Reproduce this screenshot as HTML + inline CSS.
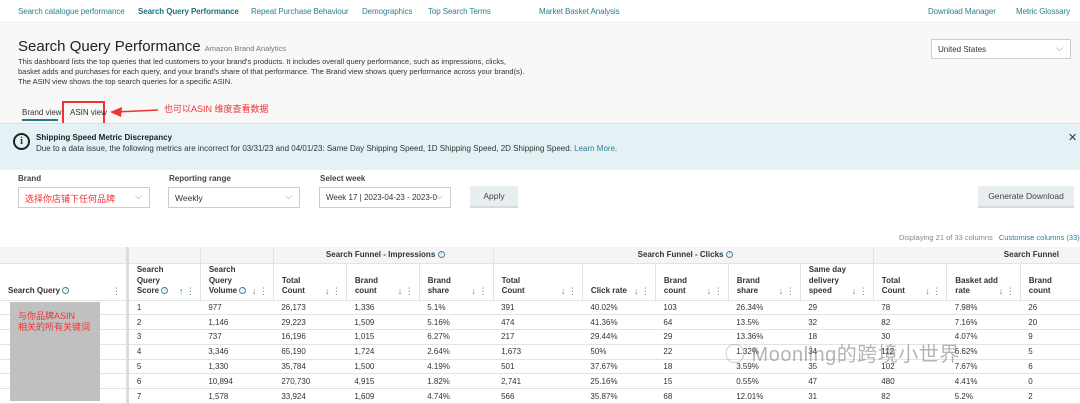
<!DOCTYPE html>
<html><head><meta charset="utf-8"><style>
*{margin:0;padding:0;box-sizing:border-box}
body{width:1080px;height:403px;overflow:hidden;background:#fff;font-family:"Liberation Sans","Noto Sans CJK SC",sans-serif;color:#333;position:relative;font-size:9px}
.a{position:absolute;white-space:nowrap}
.nav{color:#2c7f92;font-size:8px;top:7px;letter-spacing:-0.1px}
.sel{position:absolute;border:1px solid #ccc;background:#fff;height:21px;font-size:8.5px;padding:5px 6px;color:#333}
.sel:after{content:"⌵";position:absolute;right:7px;top:3px;color:#888;font-size:9px}
.btn{position:absolute;background:#e8eeef;border-bottom:2px solid #d5dcdd;font-size:8.5px;text-align:center;color:#444}
table{position:absolute;top:247px;left:0;border-collapse:collapse;font-size:8px;table-layout:fixed}
td,th{border-bottom:1px solid #e3e3e3;font-weight:normal;text-align:left;padding:0 4px 0 8px;vertical-align:bottom;color:#333;position:relative}
th{font-weight:bold;color:#333;line-height:10.5px}
thead tr.g th{height:16px;text-align:center;vertical-align:middle;border-left:1px solid #e3e3e3}
thead tr.h th{height:37px;padding-bottom:3px;border-left:1px solid #e3e3e3}
tbody td{height:14.8px;vertical-align:middle}
.q{border-right:3px solid #ddd!important}
.ar{position:absolute;right:5px;bottom:3px;color:#777;font-weight:normal;font-size:9px}
.hq{display:inline-block;width:7px;height:7px;border:1px solid #3a8a9c;border-radius:50%;font-size:5px;line-height:5px;text-align:center;color:#3a8a9c;vertical-align:middle;font-weight:normal}
</style></head><body>
<div class="a" style="left:0;top:0;width:1080px;height:23px;background:#fff;border-bottom:1px solid #eee"></div>
<div class="a nav" style="left:18px">Search catalogue performance</div>
<div class="a nav" style="left:138px;font-weight:bold;color:#1f6f80">Search Query Performance</div>
<div class="a nav" style="left:251px">Repeat Purchase Behaviour</div>
<div class="a nav" style="left:362px">Demographics</div>
<div class="a nav" style="left:428px">Top Search Terms</div>
<div class="a nav" style="left:539px">Market Basket Analysis</div>
<div class="a nav" style="left:928px">Download Manager</div>
<div class="a nav" style="left:1016px">Metric Glossary</div>
<div class="a" style="left:0;top:24px;width:1080px;height:99px;background:#f8f8f8"></div>
<div class="a" style="left:18px;top:38px;font-size:15px;color:#222">Search Query Performance <span style="font-size:7.5px;color:#777">Amazon Brand Analytics</span></div>
<div class="a" style="left:18px;top:57px;font-size:7.5px;line-height:10px;color:#333;white-space:normal;width:510px">This dashboard lists the top queries that led customers to your brand's products. It includes overall query performance, such as impressions, clicks, basket adds and purchases for each query, and your brand's share of that performance. The Brand view shows query performance across your brand(s). The ASIN view shows the top search queries for a specific ASIN.</div>
<div class="sel" style="left:931px;top:39px;width:140px;height:20px;font-size:8px">United States</div>
<div class="a" style="left:22px;top:108px;font-size:8px">Brand view</div>
<div class="a" style="left:22px;top:119px;width:36px;height:2px;background:#1f7a8c"></div>
<div class="a" style="left:62px;top:101px;width:43px;height:24px;border:2px solid #e33"></div>
<div class="a" style="left:70px;top:108px;font-size:8px">ASIN view</div>
<svg class="a" style="left:110px;top:105px" width="50" height="14"><line x1="6" y1="7" x2="48" y2="5" stroke="#e33" stroke-width="1.5"/><polygon points="0,7 12,2 11,12" fill="#e33"/></svg>
<div class="a" style="left:164px;top:102px;color:#e33;font-size:9px">也可以ASIN 维度查看数据</div>
<div class="a" style="left:0;top:123px;width:1080px;height:47px;background:#e4f2f5;border-top:1px solid #ddd"></div>
<div class="a" style="left:13px;top:133px;width:17px;height:17px;border:2px solid #222;border-radius:50%;text-align:center;font-size:10px;line-height:13px;font-weight:bold;font-family:'Liberation Serif',serif">i</div>
<div class="a" style="left:36px;top:133px;font-size:8px;font-weight:bold;color:#222">Shipping Speed Metric Discrepancy</div>
<div class="a" style="left:36px;top:144px;font-size:8px;color:#333">Due to a data issue, the following metrics are incorrect for 03/31/23 and 04/01/23: Same Day Shipping Speed, 1D Shipping Speed, 2D Shipping Speed. <span style="color:#2c7f92">Learn More.</span></div>
<div class="a" style="left:1068px;top:131px;font-size:11px;color:#333">✕</div>
<div class="a" style="left:18px;top:174px;font-size:8px;font-weight:bold;color:#444">Brand</div>
<div class="a" style="left:169px;top:174px;font-size:8px;font-weight:bold;color:#444">Reporting range</div>
<div class="a" style="left:320px;top:174px;font-size:8px;font-weight:bold;color:#444">Select week</div>
<div class="sel" style="left:18px;top:187px;width:132px;color:#e33;font-size:9px;padding-top:4px">选择你店铺下任何品牌</div>
<div class="sel" style="left:168px;top:187px;width:132px">Weekly</div>
<div class="sel" style="left:319px;top:187px;width:132px;font-size:8px">Week 17 | 2023-04-23 - 2023-0</div>
<div class="btn" style="left:470px;top:186px;width:48px;height:22px;line-height:21px">Apply</div>
<div class="btn" style="left:978px;top:186px;width:96px;height:22px;line-height:21px">Generate Download</div>
<div class="a" style="left:899px;top:233px;font-size:7.5px;color:#888">Displaying 21 of 33 columns <span style="color:#2c7f92;margin-left:4px">Customise columns (33)</span></div>
<table>
<colgroup><col style="width:130px"><col style="width:74px"><col style="width:74px"><col style="width:74px"><col style="width:74px"><col style="width:75px"><col style="width:91px"><col style="width:74px"><col style="width:74px"><col style="width:73px"><col style="width:74px"><col style="width:74px"><col style="width:74px"><col style="width:60px"></colgroup>
<thead>
<tr class="g" style="background:#f5f5f5"><th class="q" style="border-left:none;background:#f5f5f5"></th><th></th><th></th><th colspan="3">Search Funnel - Impressions <span class="hq">?</span></th><th colspan="5">Search Funnel - Clicks <span class="hq">?</span></th><th colspan="3" style="text-align:left;padding-left:130px">Search Funnel</th></tr>
<tr class="h" style="background:#fff">
<th class="q" style="border-left:none">Search Query <span class="hq">?</span><span class="ar">⋮</span></th>
<th>Search<br>Query<br>Score <span class="hq">?</span><span class="ar" style="color:#1f7a8c">↑ ⋮</span></th>
<th>Search<br>Query<br>Volume <span class="hq">?</span><span class="ar">↓ ⋮</span></th>
<th>Total<br>Count<span class="ar">↓ ⋮</span></th>
<th>Brand<br>count<span class="ar">↓ ⋮</span></th>
<th>Brand<br>share<span class="ar">↓ ⋮</span></th>
<th>Total<br>Count<span class="ar">↓ ⋮</span></th>
<th>Click rate<span class="ar">↓ ⋮</span></th>
<th>Brand<br>count<span class="ar">↓ ⋮</span></th>
<th>Brand<br>share<span class="ar">↓ ⋮</span></th>
<th>Same day<br>delivery<br>speed<span class="ar">↓ ⋮</span></th>
<th>Total<br>Count<span class="ar">↓ ⋮</span></th>
<th>Basket add<br>rate<span class="ar">↓ ⋮</span></th>
<th>Brand<br>count</th></tr>
</thead>
<tbody>
<tr><td class="q"></td><td>1</td><td>977</td><td>26,173</td><td>1,336</td><td>5.1%</td><td>391</td><td>40.02%</td><td>103</td><td>26.34%</td><td>29</td><td>78</td><td>7.98%</td><td>26</td></tr>
<tr><td class="q"></td><td>2</td><td>1,146</td><td>29,223</td><td>1,509</td><td>5.16%</td><td>474</td><td>41.36%</td><td>64</td><td>13.5%</td><td>32</td><td>82</td><td>7.16%</td><td>20</td></tr>
<tr><td class="q"></td><td>3</td><td>737</td><td>16,196</td><td>1,015</td><td>6.27%</td><td>217</td><td>29.44%</td><td>29</td><td>13.36%</td><td>18</td><td>30</td><td>4.07%</td><td>9</td></tr>
<tr><td class="q"></td><td>4</td><td>3,346</td><td>65,190</td><td>1,724</td><td>2.64%</td><td>1,673</td><td>50%</td><td>22</td><td>1.32%</td><td>34</td><td>112</td><td>6.62%</td><td>5</td></tr>
<tr><td class="q"></td><td>5</td><td>1,330</td><td>35,784</td><td>1,500</td><td>4.19%</td><td>501</td><td>37.67%</td><td>18</td><td>3.59%</td><td>35</td><td>102</td><td>7.67%</td><td>6</td></tr>
<tr><td class="q"></td><td>6</td><td>10,894</td><td>270,730</td><td>4,915</td><td>1.82%</td><td>2,741</td><td>25.16%</td><td>15</td><td>0.55%</td><td>47</td><td>480</td><td>4.41%</td><td>0</td></tr>
<tr><td class="q"></td><td>7</td><td>1,578</td><td>33,924</td><td>1,609</td><td>4.74%</td><td>566</td><td>35.87%</td><td>68</td><td>12.01%</td><td>31</td><td>82</td><td>5.2%</td><td>2</td></tr>
</tbody></table>
<div class="a" style="left:10px;top:302px;width:90px;height:99px;background:#c0c0c0"></div>
<div class="a" style="left:18px;top:311px;color:#e33;font-size:9px;line-height:11px">与你品牌ASIN<br>相关的所有关键词</div>
<div class="a" style="left:725px;top:338px;font-size:20px;color:rgba(120,120,120,0.55);letter-spacing:0.5px">◯ Moonling的跨境小世界</div>
</body></html>
